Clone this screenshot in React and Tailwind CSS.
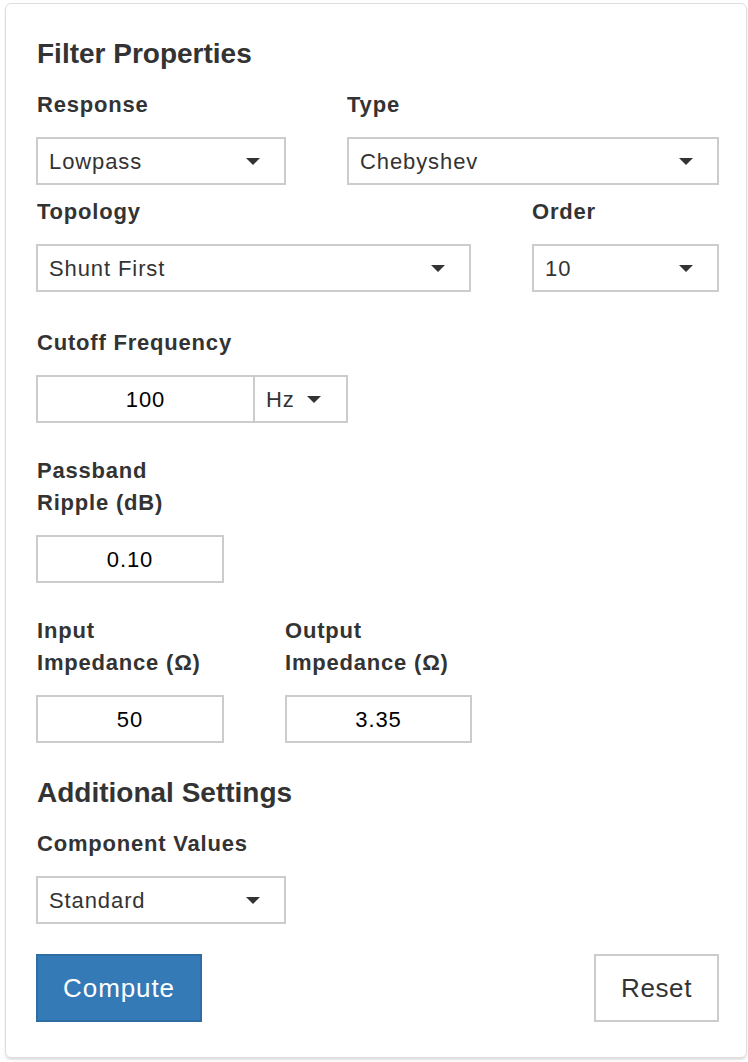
import React from 'react';

const font = { fontFamily: '"Liberation Sans", Arial, sans-serif' };

const Caret = () => (
  <span className="inline-block w-0 h-0 border-l-[7px] border-r-[7px] border-t-[7px] border-l-transparent border-r-transparent border-t-[#333]" />
);

const Label = ({ children, className = '' }) => (
  <div className={`text-[22px] font-bold leading-[32px] tracking-[0.8px] text-[#333] mb-[16px] ${className}`}>
    {children}
  </div>
);

const Select = ({ value, className = '' }) => (
  <div className={`h-[48px] border-2 border-[#ccc] bg-white flex items-center justify-between pl-[11px] pr-[24px] text-[22px] tracking-[0.9px] text-[#333] ${className}`}>
    <span>{value}</span>
    <Caret />
  </div>
);

const NumInput = ({ value, className = '' }) => (
  <div className={`h-[48px] border-2 border-[#ccc] bg-white flex items-center justify-center text-[22px] tracking-[0.9px] text-black ${className}`}>
    {value}
  </div>
);

export default function App() {
  return (
    <div style={font} className="bg-white w-[748px] h-[1062px] pt-[3px] pl-[5px]">
      <div className="w-[742px] h-[1055px] border border-[#ddd] rounded-[6px] shadow-[0_2px_2px_rgba(0,0,0,0.12)] pt-[35px] pl-[30px] pr-[27px]">
        {/* Filter Properties */}
        <h2 className="text-[28px] font-bold leading-[30px] text-[#333] mb-[20px] ml-[1px]">Filter Properties</h2>

        <div className="flex">
          <div className="w-[250px]">
            <Label className="ml-[1px]">Response</Label>
            <Select value="Lowpass" />
          </div>
          <div className="ml-[61px] flex-1">
            <Label>Type</Label>
            <Select value="Chebyshev" />
          </div>
        </div>

        <div className="flex mt-[11px]">
          <div className="w-[435px]">
            <Label className="ml-[1px]">Topology</Label>
            <Select value="Shunt First" />
          </div>
          <div className="ml-[61px] flex-1">
            <Label>Order</Label>
            <Select value="10" />
          </div>
        </div>

        <div className="mt-[35px]">
          <Label className="ml-[1px]">Cutoff Frequency</Label>
          <div className="flex">
            <NumInput value="100" className="w-[219px]" />
            <div className="w-[93px] h-[48px] border-2 border-l-0 border-[#ccc] flex items-center justify-between pl-[11px] pr-[25px] text-[22px] tracking-[0.9px] text-[#333]">
              <span>Hz</span>
              <Caret />
            </div>
          </div>
        </div>

        <div className="mt-[32px]">
          <Label className="ml-[1px]">Passband<br />Ripple (dB)</Label>
          <NumInput value="0.10" className="w-[188px]" />
        </div>

        <div className="flex mt-[32px]">
          <div className="w-[188px]">
            <Label className="ml-[1px]">Input<br />Impedance (Ω)</Label>
            <NumInput value="50" />
          </div>
          <div className="ml-[61px] w-[187px]">
            <Label>Output<br />Impedance (Ω)</Label>
            <NumInput value="3.35" />
          </div>
        </div>

        {/* Additional Settings */}
        <h2 className="mt-[35px] ml-[1px] text-[28px] font-bold leading-[30px] text-[#333] mb-[20px]">Additional Settings</h2>
        <Label className="ml-[1px]">Component Values</Label>
        <Select value="Standard" className="w-[250px]" />

        <div className="flex justify-between mt-[30px]">
          <button className="w-[166px] h-[68px] bg-[#337ab7] border-2 border-[#2e6da4] text-white text-[26px] tracking-[0.9px]">
            Compute
          </button>
          <button className="w-[125px] h-[68px] bg-white border-2 border-[#ccc] text-[#333] text-[26px] tracking-[0.6px]">
            Reset
          </button>
        </div>
      </div>
    </div>
  );
}
